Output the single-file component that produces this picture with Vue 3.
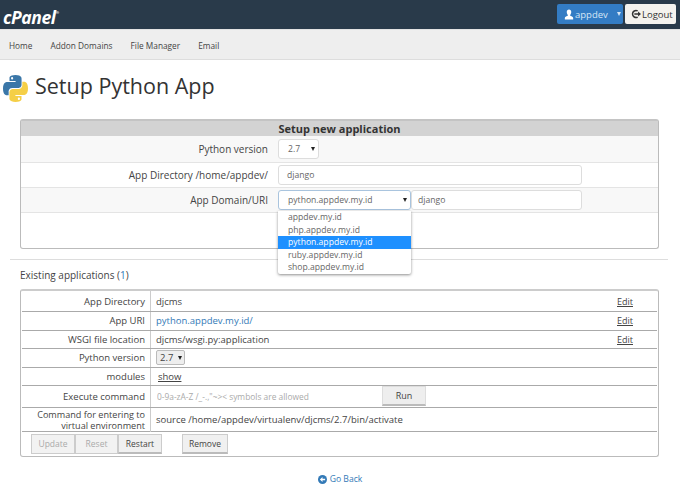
<script setup>
const domains = ['appdev.my.id', 'php.appdev.my.id', 'python.appdev.my.id', 'ruby.appdev.my.id', 'shop.appdev.my.id']
</script>

<template>
  <div class="page">
    <header class="topbar">
      <span class="logo">cPanel<sup>®</sup></span>
      <div class="top-actions">
        <button class="user-btn">
          <svg class="ico" viewBox="0 0 12 12" width="10" height="11"><path fill="#fff" d="M6 0c1.7 0 2.7 1.3 2.7 3S7.9 6 7.4 6.6c-.3.5 0 .9.6 1.2 1.4.6 3 1 3 2.4V12H1v-1.800c0-1.400 1.600-1.800 3-2.400.6-.3.900-.7.600-1.200C4.100 6 3.300 4.700 3.300 3S4.300 0 6 0z"/></svg>
          <span>appdev</span>
          <i class="caret white"></i>
        </button>
        <button class="logout-btn">
          <svg class="ico" viewBox="0 0 12 12" width="10" height="10"><path fill="none" stroke="#333" stroke-width="1.800" d="M8 2.300A4.200 4.200 0 1 0 8 9.700"/><path fill="#333" d="M4 5h4.500V3l3.500 3-3.500 3V7H4z"/></svg>
          <span>Logout</span>
        </button>
      </div>
    </header>

    <nav class="nav">
      <a>Home</a><a>Addon Domains</a><a>File Manager</a><a>Email</a>
    </nav>

    <div class="title">
      <svg viewBox="0 0 110 110" width="25" height="27" preserveAspectRatio="none">
        <path fill="#3b77a8" d="M54.900 0C26.800 0 28.600 12.200 28.600 12.200v12.600h26.800v3.800H17.900S0 26.600 0 54.900s15.600 27.300 15.600 27.300h9.300V69s-.5-15.600 15.400-15.600h26.500s14.900.2 14.900-14.400V14.800S84.100 0 54.900 0zM40.100 8.500a4.800 4.800 0 1 1 0 9.600 4.800 4.800 0 0 1 0-9.600z"/>
        <path fill="#f5cf47" transform="rotate(180 55 55)" d="M54.900 0C26.800 0 28.600 12.200 28.600 12.200v12.600h26.800v3.800H17.900S0 26.600 0 54.900s15.600 27.300 15.600 27.300h9.300V69s-.5-15.600 15.400-15.600h26.500s14.900.2 14.900-14.400V14.800S84.100 0 54.900 0zM40.100 8.500a4.800 4.800 0 1 1 0 9.600 4.800 4.800 0 0 1 0-9.600z"/>
      </svg>
      <h1>Setup Python App</h1>
    </div>

    <section class="panel setup">
      <div class="setup-head">Setup new application</div>
      <div class="setup-row shade first">
        <label>Python version</label>
        <div class="field version"><span>2.7</span><i class="caret"></i></div>
      </div>
      <div class="setup-row">
        <label>App Directory /home/appdev/</label>
        <div class="field wide"><span>django</span></div>
      </div>
      <div class="setup-row shade last">
        <label>App Domain/URI</label>
        <div class="field domain focus"><span>python.appdev.my.id</span><i class="caret"></i>
          <ul class="menu">
            <li v-for="d in domains" :key="d" :class="{ sel: d === 'python.appdev.my.id' }">{{ d }}</li>
          </ul>
        </div>
        <div class="field uri"><span>django</span></div>
      </div>
      <div class="setup-foot"></div>
    </section>

    <hr class="rule" />

    <p class="existing">Existing applications (<b>1</b>)</p>

    <section class="panel apps">
      <div class="row h19 first-row"><div class="k">App Directory</div><div class="v">djcms</div><a class="edit">Edit</a></div>
      <div class="row h19"><div class="k">App URI</div><div class="v"><a class="link">python.appdev.my.id/</a></div><a class="edit">Edit</a></div>
      <div class="row h18"><div class="k">WSGI file location</div><div class="v">djcms/wsgi.py:application</div><a class="edit">Edit</a></div>
      <div class="row h19"><div class="k">Python version</div><div class="v"><span class="mini"><span>2.7</span><i class="caret"></i></span></div></div>
      <div class="row h18"><div class="k">modules</div><div class="v"><a class="show">show</a></div></div>
      <div class="row h22"><div class="k">Execute command</div><div class="v cmd"><span class="ph">0-9a-zA-Z /_-.,"~&gt;&lt; symbols are allowed</span><button class="run">Run</button></div></div>
      <div class="row h24"><div class="k two">Command for entering to<br />virtual environment</div><div class="v">source /home/appdev/virtualenv/djcms/2.7/bin/activate</div></div>
      <div class="btns">
        <div class="group">
          <button class="btn off">Update</button><button class="btn off">Reset</button><button class="btn">Restart</button>
        </div>
        <button class="btn remove">Remove</button>
      </div>
    </section>

    <div class="back">
      <svg viewBox="0 0 12 12" width="9" height="9"><circle cx="6" cy="6" r="6" fill="#337ab7"/><path fill="#fff" d="M2.500 6 6 2.800V5h3.500v2H6v2.200z"/></svg>
      <a>Go Back</a>
    </div>
  </div>
</template>

<style>
html, body { margin: 0; background: #fff; }
</style>

<style scoped>
.page {
  width: 680px;
  height: 487px;
  overflow: hidden;
  font-family: "Open Sans", sans-serif;
  font-size: 9.500px;
  color: #444;
  background: #fff;
}
.topbar {
  height: 29px;
  background: #293a4a;
  display: flex;
  align-items: flex-start;
  justify-content: space-between;
  padding: 0 4px 0 3px;
  box-sizing: border-box;
}
.logo {
  margin-top: 2px;
  font-size: 17.500px;
  line-height: 22px;
  font-weight: 700;
  font-style: italic;
  color: #fff;
  letter-spacing: -.4px;
}
.logo sup { font-size: 4px; font-style: normal; vertical-align: 10px; }
.top-actions { display: flex; gap: 2px; margin-top: 4px; }
button { font-family: inherit; }
.user-btn, .logout-btn {
  height: 20px;
  border: 0;
  border-radius: 2px;
  padding: 0;
  display: flex;
  align-items: center;
  font-size: 9.500px;
}
.user-btn {
  width: 66px;
  background: #337cc4;
  color: #d6e6f5;
  padding-left: 7px;
  box-sizing: border-box;
  gap: 1px;
}
.user-btn .caret { margin-left: 8px; }
.logout-btn {
  width: 51px;
  background: #f4f2ee;
  color: #333;
  padding-left: 6px;
  box-sizing: border-box;
  gap: 1px;
}
.caret {
  display: inline-block;
  width: 0;
  height: 0;
  border-left: 2.500px solid transparent;
  border-right: 2.500px solid transparent;
  border-top: 4px solid #222;
}
.caret.white { border-top-color: #d6e6f5; }
.nav {
  height: 31px;
  background: #eeeeee;
  border-top: 1px solid #e2e2e2;
  border-bottom: 1px solid #ddd;
  box-sizing: border-box;
  display: flex;
  align-items: center;
  gap: 18px;
  padding: 2px 0 0 9px;
  color: #444;
  font-size: 8.300px;
}
.title {
  display: flex;
  align-items: center;
  gap: 7px;
  padding: 11px 0 0 3px;
  height: 36px;
}
.title svg { margin-bottom: 2px; }
.title h1 {
  margin: 0 0 7px;
  font-size: 21.500px;
  font-weight: 400;
  color: #333;
  line-height: 30px;
}
.panel {
  margin: 0 21px 0 20px;
  border: 1px solid #bbb;
  border-radius: 3px;
  background: #fff;
  box-sizing: border-box;
}
.setup {
  margin-top: 12px;
  height: 130px;
  border-top: 2px solid #c4c4c4;
}
.setup-head {
  height: 15px;
  background: #d3d3d3;
  text-align: center;
  font-weight: 700;
  font-size: 11px;
  line-height: 15px;
  color: #333;
}
.setup-row {
  height: 25px;
  display: flex;
  align-items: center;
  border-bottom: 1px solid #e4e4e4;
  box-sizing: border-box;
  position: relative;
}
.setup-row.shade { background: #f8f8f8; }
.setup-row.first { height: 27px; }
.setup-row label {
  width: 247px;
  text-align: right;
  font-size: 10px;
  color: #444;
  flex: none;
}
.field {
  background: #fff;
  border: 1px solid #ddd;
  border-radius: 3px;
  box-sizing: border-box;
  height: 20px;
  display: flex;
  align-items: center;
  justify-content: space-between;
  font-size: 8.600px;
  color: #666;
  position: relative;
  flex: none;
}
.version { margin-left: 10px; width: 41px; padding: 0 3px 0 9px; }
.wide { margin-left: 10px; width: 304px; padding: 0 8px; }
.domain { margin-left: 10px; width: 133px; padding: 0 3px 0 9px; }
.domain.focus { border-color: #a9c4de; }
.uri { margin-left: 0; width: 171px; padding: 0 6px; }
.menu {
  position: absolute;
  left: -1px;
  top: 20px;
  width: 133px;
  margin: 0;
  padding: 0;
  list-style: none;
  background: #fff;
  box-shadow: 0 1px 3px rgba(0, 0, 0, .45);
  z-index: 3;
  border-radius: 0 0 2px 2px;
}
.menu li {
  height: 12.600px;
  line-height: 12.600px;
  padding-left: 10px;
  color: #666;
}
.menu li.sel { background: #1e90ff; color: #fff; }
.rule {
  margin: 10px 12px 0 10px;
  border: 0;
  border-top: 1px solid #ddd;
}
.existing {
  margin: 9px 0 7px 20px;
  font-size: 10px;
  line-height: 13px;
  color: #444;
}
.existing b { font-weight: 400; color: #337ab7; }
.apps {
  height: 168px;
  padding: 0 1px;
  border-top: 2px solid #ccc;
}
.row {
  display: grid;
  grid-template-columns: 129px 1fr 40px;
  border-bottom: 1px solid #aaa;
  box-sizing: border-box;
  align-items: center;
  font-size: 9.500px;
}
.h19 { height: 18.600px; }
.h18 { height: 18.400px; }
.h22 { height: 22px; }
.h24 { height: 24px; }
.first-row { height: 21px; }
.k {
  text-align: right;
  padding-right: 5px;
  border-right: 1px solid #ccc;
  height: 100%;
  display: flex;
  align-items: center;
  justify-content: flex-end;
  box-sizing: border-box;
}
.k.two { line-height: 11.500px; font-size: 9.100px; padding-top: 1px; }
.v { padding-left: 5px; grid-column: 2; color: #444; white-space: nowrap; }
.row:not(:has(.edit)) .v { grid-column: 2 / 4; }
.edit { text-decoration: underline; color: #444; font-size: 9px; }
.link { color: #337ab7; }
.show { text-decoration: underline; margin-left: 2px; }
.mini {
  display: inline-flex;
  align-items: center;
  gap: 5px;
  height: 15px;
  width: 29px;
  box-sizing: border-box;
  background: #eee;
  border: 1px solid #bbb;
  border-radius: 2px;
  padding-left: 3px;
}
.cmd { display: flex; align-items: center; padding-left: 6px; }
.ph {
  color: #aaa;
  font-size: 8.400px;
  width: 225px;
  flex: none;
  overflow: hidden;
  white-space: nowrap;
}
.run {
  width: 44px;
  height: 20px;
  background: #eee;
  border: 1px solid #ddd;
  border-bottom: 2px solid #bbb;
  font-size: 9px;
  color: #444;
  padding: 0;
}
.btns {
  display: flex;
  gap: 20px;
  padding: 2px 0 0 9px;
}
.group { display: flex; }
.btn {
  height: 20px;
  background: #f0f0f0;
  border: 1px solid #ccc;
  border-bottom: 2px solid #bbb;
  box-sizing: border-box;
  font-size: 8.500px;
  color: #444;
  padding: 0;
  width: 44px;
}
.btn.off { color: #aaa; background: #f2f2f2; border-bottom: 1px solid #ccc; }
.btn.off + .btn.off { width: 43px; }
.btn.remove { width: 46px; }
.back {
  margin-top: 16px;
  display: flex;
  align-items: center;
  justify-content: center;
  gap: 3px;
  color: #337ab7;
  font-size: 8.600px;
  line-height: 12px;
}
</style>
